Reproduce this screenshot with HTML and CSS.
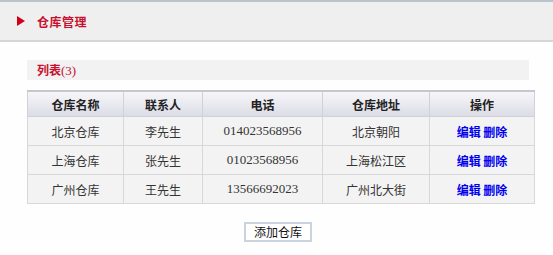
FILE: index.html
```html
<!DOCTYPE html>
<html lang="zh-CN">

<head>
    <meta charset="UTF-8">
    <title>仓库管理</title>
    <link rel="stylesheet" href="styles.css">
</head>

<body>
    <div class="page-header">
        <span class="arrow"></span>
        <h1 class="page-title">仓库管理</h1>
    </div>
    <div class="content">
        <div class="list-bar">列表<span class="count">(3)</span></div>
        <table class="data-table">
            <thead>
                <tr>
                    <th class="col-name">仓库名称</th>
                    <th class="col-contact">联系人</th>
                    <th class="col-phone">电话</th>
                    <th class="col-addr">仓库地址</th>
                    <th class="col-op">操作</th>
                </tr>
            </thead>
            <tbody>
                <tr>
                    <td>北京仓库</td>
                    <td>李先生</td>
                    <td class="num">014023568956</td>
                    <td>北京朝阳</td>
                    <td><a href="#" class="op">编辑</a> <a href="#" class="op">删除</a></td>
                </tr>
                <tr>
                    <td>上海仓库</td>
                    <td>张先生</td>
                    <td class="num">01023568956</td>
                    <td>上海松江区</td>
                    <td><a href="#" class="op">编辑</a> <a href="#" class="op">删除</a></td>
                </tr>
                <tr>
                    <td>广州仓库</td>
                    <td>王先生</td>
                    <td class="num">13566692023</td>
                    <td>广州北大街</td>
                    <td><a href="#" class="op">编辑</a> <a href="#" class="op">删除</a></td>
                </tr>
            </tbody>
        </table>
        <div class="actions">
            <button class="add-button">添加仓库</button>
        </div>
    </div>
</body>

</html>
```
FILE: styles.css
```css
body {
    margin: 0;
    padding: 0;
    background: #fefefe;
    color: #222;
    font-family: "Noto Sans CJK SC", sans-serif;
    font-size: 12px;
}

.page-header {
    display: flex;
    align-items: center;
    height: 38px;
    padding-left: 17px;
    background: #efefef;
    border-top: 2px solid #b9c3cc;
    border-bottom: 2px solid #d6d6d6;
}

.arrow {
    width: 0;
    height: 0;
    border-top: 5px solid transparent;
    border-bottom: 5px solid transparent;
    border-left: 8px solid #d0021b;
    margin-right: 12px;
}

.page-title {
    margin: 0;
    font-size: 12px;
    font-weight: bold;
    color: #c8102e;
    letter-spacing: 0.5px;
}

.content {
    padding: 18px 24px 0 27px;
}

.list-bar {
    height: 20px;
    line-height: 20px;
    padding-left: 10px;
    background: #f2f2f2;
    color: #c8102e;
    font-weight: bold;
}

.count {
    font-family: "Liberation Serif", serif;
    font-weight: normal;
    font-size: 13px;
}

.data-table {
    width: 502px;
    margin-top: 10px;
    table-layout: fixed;
    border-collapse: collapse;
    border: 1px solid #cfcfcf;
}

.data-table th {
    height: 24px;
    padding: 0;
    background: linear-gradient(to bottom, #f6f6f9, #dcdce6);
    border: 1px solid #cfd2d8;
    border-top: 2px solid #c4c8ce;
    font-weight: bold;
    color: #222;
}

.data-table td {
    height: 28px;
    padding: 0;
    background: #f3f3f3;
    border: 1px solid #d8d8d8;
    text-align: center;
    color: #333;
}

.col-name { width: 95px; }
.col-contact { width: 78px; }
.col-phone { width: 119px; }
.col-addr { width: 106px; }
.col-op { width: 104px; }

.num {
    font-family: "Liberation Serif", serif;
    font-size: 13px;
}

.op {
    color: #0000ee;
    font-weight: bold;
    text-decoration: none;
}

.actions {
    text-align: center;
    margin-top: 18px;
}

.add-button {
    font-family: "Noto Sans CJK SC", sans-serif;
    font-size: 12px;
    padding: 0 8px;
    height: 20px;
    line-height: 16px;
    background: #fff;
    color: #111;
    border: 2px solid #c9d4de;
    border-radius: 0;
}
```
